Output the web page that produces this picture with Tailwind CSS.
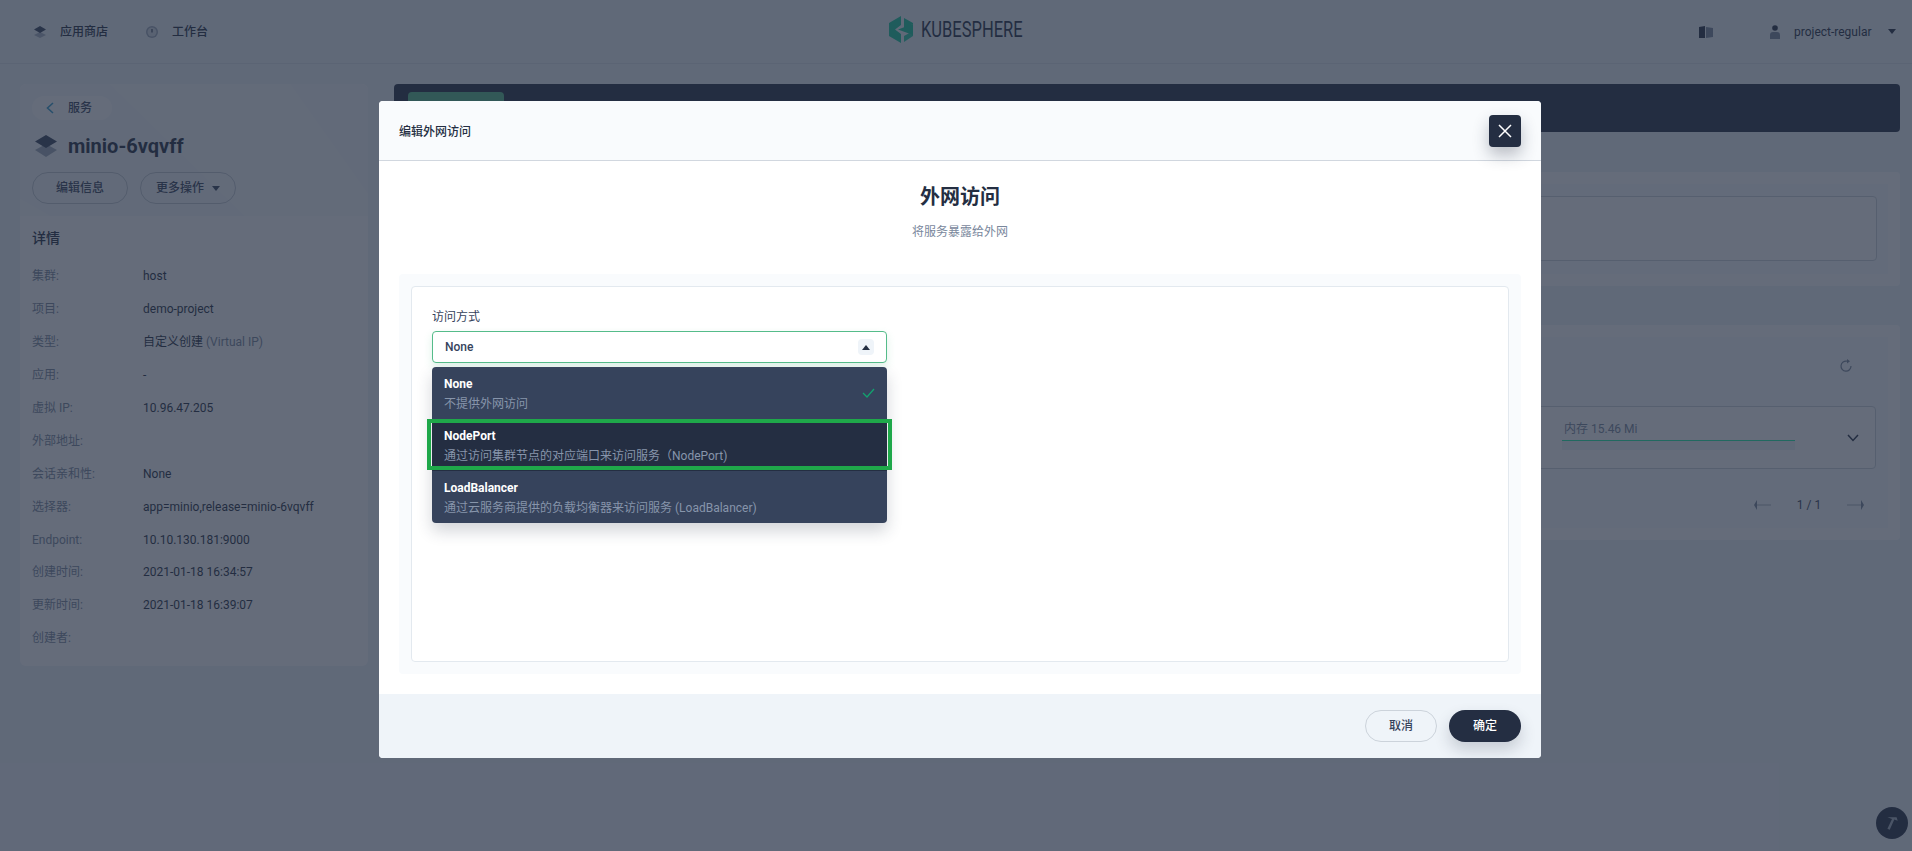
<!DOCTYPE html>
<html lang="zh-CN">
<head>
    <meta charset="UTF-8">
    <title>编辑外网访问 - KubeSphere</title>
    <script src="https://cdn.jsdelivr.net/npm/@tailwindcss/browser@4"></script>
</head>
<body class="font-[Roboto,'Noto_Sans_CJK_SC',sans-serif] text-xs text-[#242e42]">
<div class="relative w-full h-[851px] overflow-hidden bg-[#eff4f9]">

    <!-- top nav -->
    <header class="h-16 flex items-center justify-between border-b border-[#dde4ec] pl-[34px] pr-4 relative">
        <div class="flex items-center font-medium">
            <svg class="w-3 h-3 mr-[14px]" viewBox="0 0 12 12"><path d="M6 6 12 9 6 12 0 9z" fill="#79879c" opacity=".6"/><path d="M6 0 12 3.500 6 7 0 3.500z" fill="#36435c"/></svg>
            <span>应用商店</span>
            <svg class="w-3 h-3 ml-[38px] mr-[14px]" viewBox="0 0 12 12"><circle cx="6" cy="6" r="6" fill="#79879c" opacity=".7"/><circle cx="6" cy="6" r="4.500" fill="#d8dee5"/><rect x="5.400" y="3" width="1.200" height="3.500" fill="#36435c"/></svg>
            <span>工作台</span>
        </div>
        <div class="absolute left-[889px] top-4 flex items-center">
            <svg class="w-6 h-[27px]" viewBox="0 0 24 27">
                <path d="M12 0V9L6 13.500 12 18V27L0 20V7z" fill="#14c99a"/>
                <path d="M15 2 24 7V8L15 13z" fill="#14c99a"/>
                <path d="M9 13.500 24 8V19z" fill="#14c99a"/>
                <path d="M15 20 24 15V20L15 26z" fill="#14c99a" opacity=".9"/>
            </svg>
            <span class="ml-2 inline-block origin-left scale-x-[.75] text-[22px] leading-none">KUBESPHERE</span>
        </div>
        <div class="flex items-center">
            <svg class="w-[14px] h-[12px] mr-[57px]" viewBox="0 0 14 12"><path d="M0 1 6 0V12H0z" fill="#242e42"/><path d="M7 1 14 2V11L7 12z" fill="#79879c"/></svg>
            <svg class="w-[10px] h-[14px] mr-[14px]" viewBox="0 0 10 14"><circle cx="5" cy="3" r="2.800" fill="#242e42"/><path d="M0 14V10Q0 7 3 7H7Q10 7 10 10V14z" fill="#79879c"/></svg>
            <span class="w-[94px]">project-regular</span>
            <span class="w-0 h-0 border-x-4 border-x-transparent border-t-[5px] border-t-[#242e42]"></span>
        </div>
    </header>

    <main class="flex pl-5 pr-3 pt-5 gap-[26px]">
        <!-- left panel -->
        <aside class="w-[348px] h-[582px] shrink-0 bg-white rounded-md overflow-hidden">
            <div class="relative h-[132px] bg-[#f6f9fb] px-3 pt-3">
                <svg class="absolute inset-0 w-full h-full" viewBox="0 0 348 132"><path d="M90 0H270L348 110V132H225z" fill="#f9fbfc"/><path d="M0 115 30 132H0z" fill="#f9fbfc"/></svg>
                <div class="relative">
                    <div class="w-20 h-6 rounded-full bg-white flex items-center">
                        <svg class="w-2 h-3 ml-[14px] mr-[14px]" viewBox="0 0 8 12" fill="none" stroke="#329dce" stroke-width="1.600"><path d="M7 1 1.500 6 7 11"/></svg>
                        <span class="font-medium text-[#36435c]">服务</span>
                    </div>
                    <div class="flex items-center h-[28px] mt-[12px]">
                        <svg class="w-[22px] h-[22px] ml-[3px] mr-[11px]" viewBox="0 0 22 22"><path d="M11 9 22 15 11 22 0 15z" fill="#79879c" opacity=".7"/><path d="M11 0 22 6.500 11 13 0 6.500z" fill="#36435c"/></svg>
                        <span class="text-xl leading-7 font-bold">minio-6vqvff</span>
                    </div>
                    <div class="flex gap-3 mt-3">
                        <button class="w-24 h-8 rounded-full border border-[#c1c9d1] font-medium text-[#36435c]">编辑信息</button>
                        <button class="w-24 h-8 rounded-full border border-[#c1c9d1] font-medium text-[#36435c] flex items-center justify-center">更多操作<span class="ml-2 w-0 h-0 border-x-[4.500px] border-x-transparent border-t-[5px] border-t-[#36435c]"></span></button>
                    </div>
                </div>
            </div>
            <div class="px-3 pt-3">
                <h3 class="text-sm leading-5 font-medium">详情</h3>
                <dl class="mt-3">
                    <div class="flex items-center h-[32.900px]"><dt class="w-[111px] text-[#79879c]">集群:</dt><dd>host</dd></div>
                    <div class="flex items-center h-[32.900px]"><dt class="w-[111px] text-[#79879c]">项目:</dt><dd>demo-project</dd></div>
                    <div class="flex items-center h-[32.900px]"><dt class="w-[111px] text-[#79879c]">类型:</dt><dd>自定义创建 <span class="text-[#79879c]">(Virtual IP)</span></dd></div>
                    <div class="flex items-center h-[32.900px]"><dt class="w-[111px] text-[#79879c]">应用:</dt><dd>-</dd></div>
                    <div class="flex items-center h-[32.900px]"><dt class="w-[111px] text-[#79879c]">虚拟 IP:</dt><dd>10.96.47.205</dd></div>
                    <div class="flex items-center h-[32.900px]"><dt class="w-[111px] text-[#79879c]">外部地址:</dt><dd></dd></div>
                    <div class="flex items-center h-[32.900px]"><dt class="w-[111px] text-[#79879c]">会话亲和性:</dt><dd>None</dd></div>
                    <div class="flex items-center h-[32.900px]"><dt class="w-[111px] text-[#79879c]">选择器:</dt><dd>app=minio,release=minio-6vqvff</dd></div>
                    <div class="flex items-center h-[32.900px]"><dt class="w-[111px] text-[#79879c]">Endpoint:</dt><dd>10.10.130.181:9000</dd></div>
                    <div class="flex items-center h-[32.900px]"><dt class="w-[111px] text-[#79879c]">创建时间:</dt><dd>2021-01-18 16:34:57</dd></div>
                    <div class="flex items-center h-[32.900px]"><dt class="w-[111px] text-[#79879c]">更新时间:</dt><dd>2021-01-18 16:39:07</dd></div>
                    <div class="flex items-center h-[32.900px]"><dt class="w-[111px] text-[#79879c]">创建者:</dt><dd></dd></div>
                </dl>
            </div>
        </aside>

        <!-- right column -->
        <section class="flex-1 flex flex-col">
            <div class="h-12 rounded bg-[#242e42] pl-[14px] pt-2">
                <div class="w-24 h-10 rounded-t bg-[#55bc8a]"></div>
            </div>
            <div class="mt-10 h-[114px] rounded bg-white p-3">
                <div class="h-[90px] bg-[#f9fbfd] p-3 pr-[11px]">
                    <div class="h-[65px] rounded border border-[#ccd3db] bg-white"></div>
                </div>
            </div>
            <div class="mt-[39px] h-[215px] rounded bg-white p-3">
                <div class="h-[191px] bg-[#f9fbfd] px-3 relative">
                    <div class="absolute right-[35px] top-[22px]">
                        <svg class="w-[14px] h-[14px]" viewBox="0 0 14 14" fill="none" stroke="#79879c" stroke-width="1.200"><path d="M8 2.200A5 5 0 1 0 12 7"/><path d="M8 0 11 2.200 8 4.500z" fill="#79879c" stroke="none"/></svg>
                    </div>
                    <div class="absolute left-3 right-3 top-[69px] h-[63px] rounded border border-[#ccd3db] bg-white">
                        <div class="absolute left-[1143px] top-[14px] w-[233px]">
                            <p class="pl-[2px] text-[#79879c] leading-4">内存 15.46 Mi</p>
                            <div class="mt-[3px] h-[10px] bg-[#eff4f9] border-t border-[#1cf5a9]"></div>
                        </div>
                        <svg class="absolute right-4 top-[27px] w-3 h-2" viewBox="0 0 12 8" fill="none" stroke="#242e42" stroke-width="1.500"><path d="M1 1 6 6.500 11 1"/></svg>
                    </div>
                    <div class="absolute right-6 top-[160px] flex items-center">
                        <svg class="w-[17px] h-[10px]" viewBox="0 0 17 10"><path d="M3 0V10L0 5z" fill="#79879c"/><path d="M3 5H17" stroke="#a5b0bd"/></svg>
                        <span class="w-[76px] text-center text-[#36435c]">1 / 1</span>
                        <svg class="w-[17px] h-[10px]" viewBox="0 0 17 10"><path d="M14 0V10L17 5z" fill="#79879c"/><path d="M0 5H14" stroke="#a5b0bd"/></svg>
                    </div>
                </div>
            </div>
        </section>
    </main>

    <!-- floating tool button -->
    <div class="absolute left-[1876px] top-[807px] w-8 h-8 rounded-full bg-[#242e42] flex items-center justify-center">
        <svg class="w-4 h-4" viewBox="0 0 14 14"><path d="M3 2H11L12 5 9 4 5 13 3 12 7 3.500z" fill="#a5b0bd"/></svg>
    </div>

    <!-- modal layer -->
    <div class="absolute inset-0 bg-[#242e42]/70">
        <div class="relative ml-[379px] mt-[101px] w-[1162px] h-[657px] rounded bg-white flex flex-col overflow-hidden">
            <div class="h-[60px] shrink-0 bg-[#f9fbfd] border-b border-[#d1d7df] flex items-center justify-between pl-5 pr-5">
                <h2 class="font-medium pt-[2px]">编辑外网访问</h2>
                <button class="w-8 h-8 rounded bg-[#242e42] shadow-[0_8px_16px_rgba(36,46,66,.3)] flex items-center justify-center">
                    <svg class="w-4 h-4" viewBox="0 0 16 16" fill="none" stroke="#fff" stroke-width="1.500"><path d="M2 2 14 14M14 2 2 14"/></svg>
                </button>
            </div>
            <div class="flex-1 relative">
                <div class="text-center pt-[22px]">
                    <h1 class="text-xl leading-7 font-bold">外网访问</h1>
                    <p class="mt-[13px] text-[#79879c] leading-4">将服务暴露给外网</p>
                </div>
                <div class="mx-5 mt-[34px] h-[400px] rounded bg-[#f9fbfd] p-3">
                    <div class="relative h-[376px] rounded border border-[#e3e9ef] bg-white pl-5 pt-[22px]">
                        <label class="block leading-4 text-[#36435c]">访问方式</label>
                        <div class="mt-[6px] w-[455px] h-8 rounded border border-[#55bc8a] bg-white shadow-[0_4px_8px_rgba(85,188,138,.2)] flex items-center justify-between pl-3 pr-3">
                            <span class="font-medium text-[#36435c]">None</span>
                            <span class="w-4 h-4 rounded-sm bg-[#eff4f9] flex items-center justify-center"><span class="w-0 h-0 border-x-[4.500px] border-x-transparent border-b-[5px] border-b-[#242e42]"></span></span>
                        </div>
                        <ul class="absolute left-5 top-[80px] w-[455px] rounded bg-[#36435c] shadow-[0_8px_16px_rgba(36,46,66,.2)] overflow-hidden">
                            <li class="h-[52px] pl-3 flex items-center justify-between pr-3">
                                <div class="pt-[2px]">
                                    <p class="font-bold text-white leading-[18px]">None</p>
                                    <p class="text-[#8795ab] leading-[20px] pt-[1px]">不提供外网访问</p>
                                </div>
                                <svg class="w-[13px] h-[10px]" viewBox="0 0 13 10" fill="none" stroke="#12a16f" stroke-width="1.300"><path d="M1 5 5 9 12 1"/></svg>
                            </li>
                            <li class="h-[52px] pl-3 flex items-center bg-[#242e42]">
                                <div class="pt-[2px]">
                                    <p class="font-bold text-white leading-[18px]">NodePort</p>
                                    <p class="text-[#8795ab] leading-[20px] pt-[1px]">通过访问集群节点的对应端口来访问服务（NodePort)</p>
                                </div>
                            </li>
                            <li class="h-[52px] pl-3 flex items-center">
                                <div class="pt-[2px]">
                                    <p class="font-bold text-white leading-[18px]">LoadBalancer</p>
                                    <p class="text-[#8795ab] leading-[20px] pt-[1px]">通过云服务商提供的负载均衡器来访问服务 (LoadBalancer)</p>
                                </div>
                            </li>
                        </ul>
                        <div class="absolute left-[15px] top-[132px] w-[465px] h-[51px] border-[4px] border-[#1fa84a]"></div>
                    </div>
                </div>
            </div>
            <div class="h-16 shrink-0 bg-[#eff4f9] flex items-center justify-end gap-3 pr-5">
                <button class="w-[72px] h-8 rounded-full border border-[#ccd3db] font-medium text-[#36435c]">取消</button>
                <button class="w-[72px] h-8 rounded-full bg-[#242e42] font-medium text-white shadow-[0_8px_16px_rgba(36,46,66,.2)]">确定</button>
            </div>
        </div>
    </div>
</div>
</body>
</html>
